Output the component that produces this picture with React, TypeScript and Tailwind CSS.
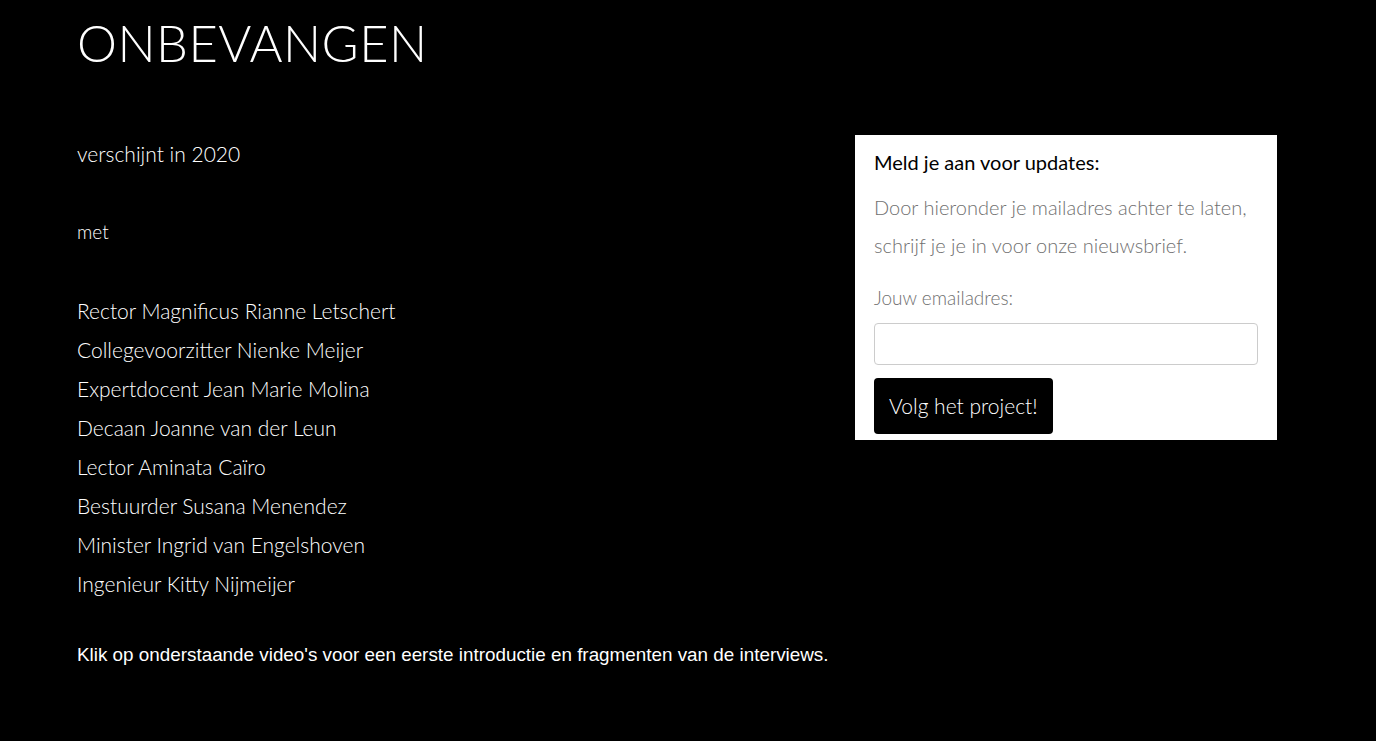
const people = [
  "Rector Magnificus Rianne Letschert",
  "Collegevoorzitter Nienke Meijer",
  "Expertdocent Jean Marie Molina",
  "Decaan Joanne van der Leun",
  "Lector Aminata Caïro",
  "Bestuurder Susana Menendez",
  "Minister Ingrid van Engelshoven",
  "Ingenieur Kitty Nijmeijer",
];

export default function App() {
  return (
    <div className="min-h-[741px] bg-black text-white font-['Lato',sans-serif]">
      <div className="pl-[77px] pr-[99px]">
        <h1 className="pt-[12px] h-[135px] text-[50.5px] leading-[62px] font-light tracking-[0.5px]">
          ONBEVANGEN
        </h1>
        <div className="flex justify-between">
          <div className="flex flex-col">
            <p className="text-[21px] leading-[38px] font-light">verschijnt in 2020</p>
            <p className="mt-[40px] text-[19px] leading-[38px] font-light">met</p>
            <ul className="mt-[40px] text-[21px] leading-[39px] font-light">
              {people.map((p) => (
                <li key={p}>{p}</li>
              ))}
            </ul>
            <p className="mt-[40px] text-[18.85px] leading-[24px] font-['Liberation_Sans',sans-serif]">
              Klik op onderstaande video's voor een eerste introductie en fragmenten van de interviews.
            </p>
          </div>
          <div className="w-[422px] h-[305px] bg-white px-[19px] pt-[12px]">
            <h3 className="text-[20px] leading-[30px] text-black">Meld je aan voor updates:</h3>
            <p className="mt-[11px] text-[20px] leading-[38px] font-light text-[#707070]">
              Door hieronder je mailadres achter te laten, schrijf je je in voor onze nieuwsbrief.
            </p>
            <label className="block mt-[22px] text-[19px] leading-[24px] font-light text-[#707070]">
              Jouw emailadres:
            </label>
            <input
              type="text"
              className="block mt-[13px] w-full h-[42px] rounded-[4px] border border-[#ccc] bg-white outline-none"
            />
            <button className="mt-[13px] h-[56px] px-[15px] rounded-[4px] bg-black text-white text-[21px] font-light">
              Volg het project!
            </button>
          </div>
        </div>
      </div>
    </div>
  );
}
